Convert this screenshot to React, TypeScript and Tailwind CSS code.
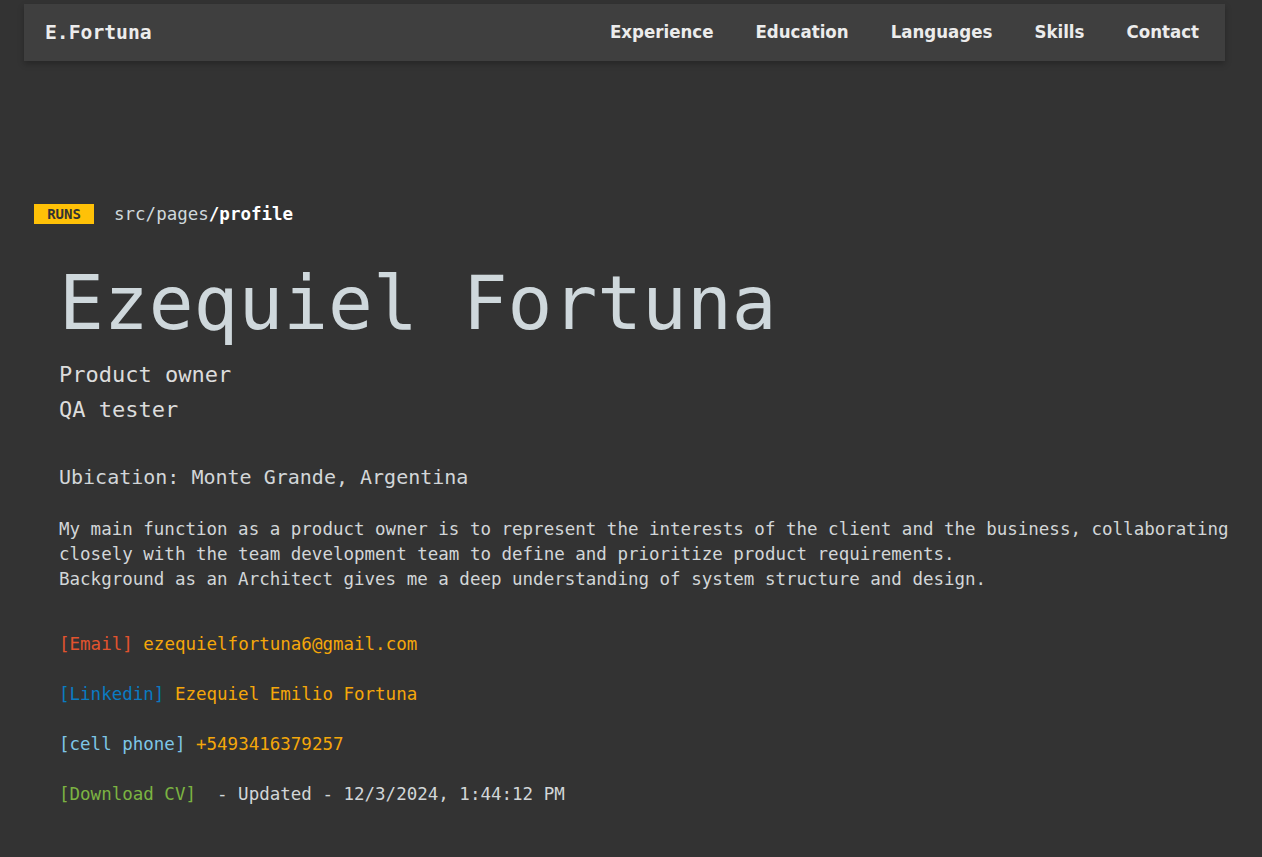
import React from "react";

const mono = { fontFamily: '"DejaVu Sans Mono", "Liberation Mono", monospace' };

export default function App() {
  return (
    <div className="min-h-[857px] w-full bg-[#333333] text-[#cfd8dc]" style={mono}>
      <div className="pt-[4px]">
        <header className="ml-[24px] flex h-[57px] w-[1201px] items-center justify-between bg-[#3f3f3f] pl-[21px] pr-[26px] shadow-[0_3px_6px_rgba(0,0,0,0.25)]">
          <div className="text-[19.7px] font-bold text-[#ececec]">E.Fortuna</div>
          <nav
            className="mb-[2px] flex gap-[42px] text-[18.5px] font-bold text-[#ececec]"
            style={{ fontFamily: '"DejaVu Sans Condensed", "Liberation Sans Narrow", sans-serif' }}
          >
            <span>Experience</span>
            <span>Education</span>
            <span>Languages</span>
            <span>Skills</span>
            <span>Contact</span>
          </nav>
        </header>
      </div>

      <main className="pt-[143px] pr-[20px]">
        <div className="flex h-[20px] items-center pl-[34px]">
          <span className="flex h-[20px] w-[60px] items-center justify-center bg-[#ffc107] text-[14px] font-bold text-[#333333]">
            RUNS
          </span>
          <span className="ml-[20px] text-[17.5px] leading-[20px] text-[#cfd8dc]">
            src/pages<span className="font-bold text-white">/profile</span>
          </span>
        </div>

        <div className="pl-[59px]">
          <h1 className="mt-[35px] text-[74.5px] font-normal leading-[90px] text-[#cfd8dc]">Ezequiel Fortuna</h1>

          <div className="mt-[8px] text-[22px] leading-[35px] text-[#dcdcdc]">
            <div>Product owner</div>
            <div>QA tester</div>
          </div>

          <p className="mt-[35px] text-[20px] leading-[30px] text-[#d2d6d8]">Ubication: Monte Grande, Argentina</p>

          <p className="mt-[25px] text-[17.5px] leading-[25px] text-[#d2d6d8]">
            My main function as a product owner is to represent the interests of the client and the business, collaborating closely with the team development team to define and prioritize product requirements.
            <br />
            Background as an Architect gives me a deep understanding of system structure and design.
          </p>

          <div className="mt-[40px] flex flex-col gap-[25px] text-[17.5px] leading-[25px]">
            <div>
              <span className="text-[#e2532e]">[Email]</span>{" "}
              <span className="text-[#f5a70a]">ezequielfortuna6@gmail.com</span>
            </div>
            <div>
              <span className="text-[#0a7bc2]">[Linkedin]</span>{" "}
              <span className="text-[#f5a70a]">Ezequiel Emilio Fortuna</span>
            </div>
            <div>
              <span className="text-[#7ec6e6]">[cell phone]</span>{" "}
              <span className="text-[#f5a70a]">+5493416379257</span>
            </div>
            <div className="whitespace-pre">
              <span className="text-[#7cb342]">[Download CV]</span>
              <span className="text-[#d2d6d8]">{"  - Updated - 12/3/2024, 1:44:12 PM"}</span>
            </div>
          </div>
        </div>
      </main>
    </div>
  );
}
